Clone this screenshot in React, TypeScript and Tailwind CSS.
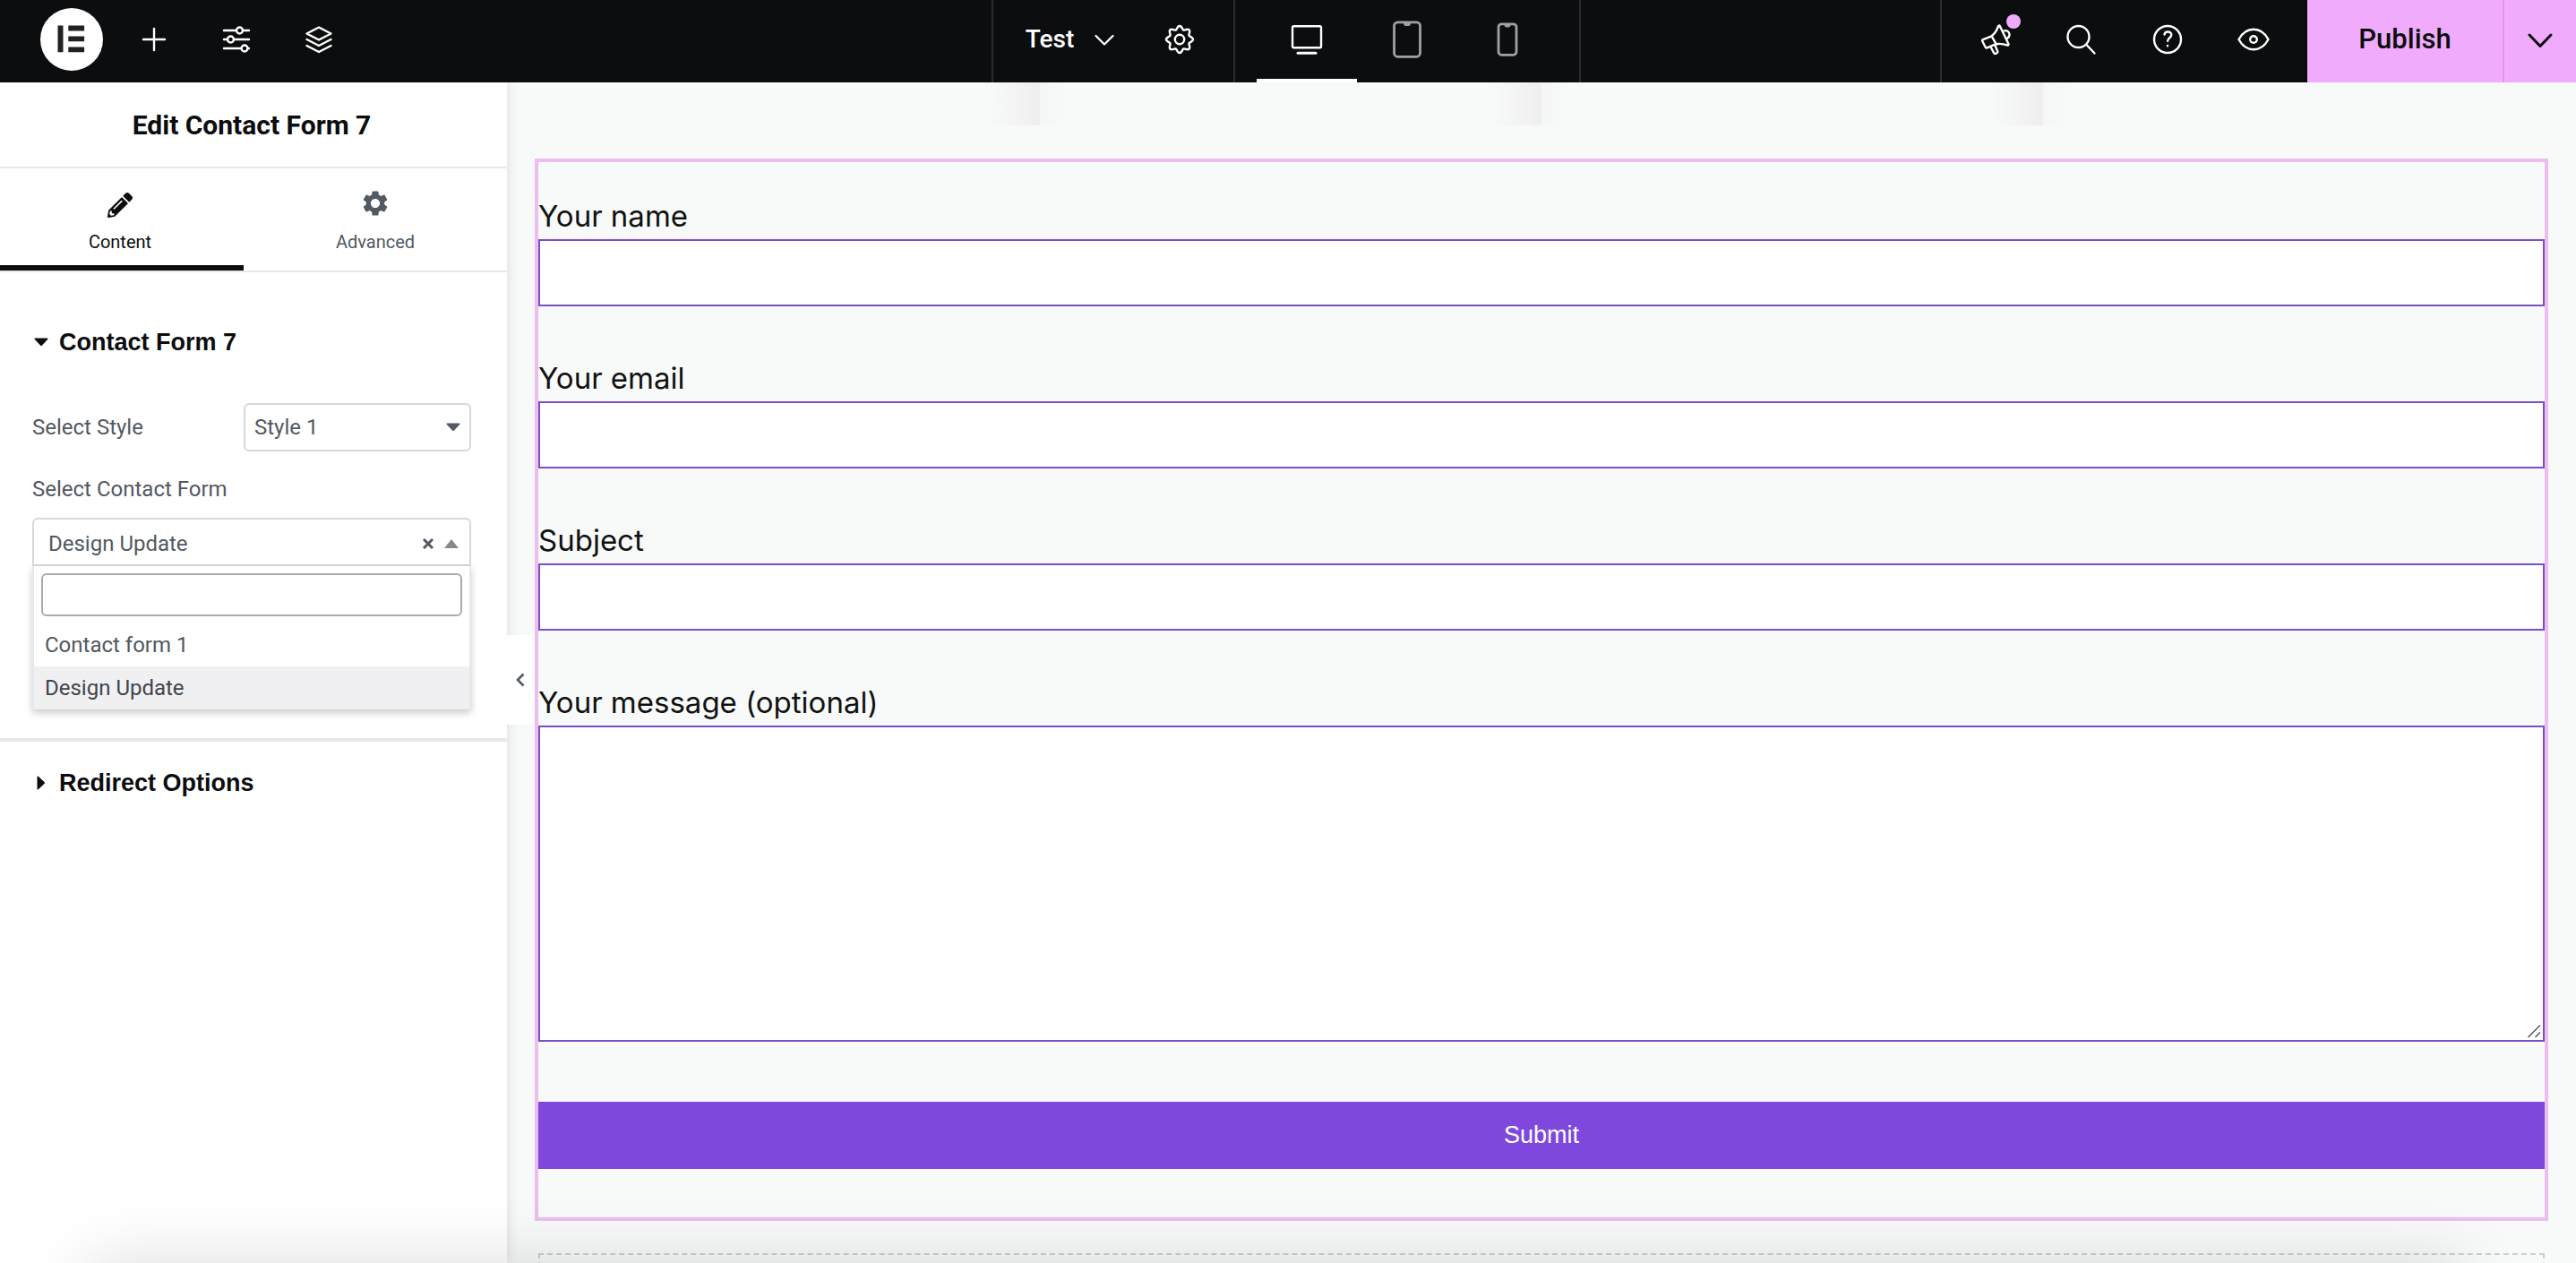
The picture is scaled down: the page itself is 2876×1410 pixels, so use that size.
import React from 'react';
import { FaPencilAlt } from 'react-icons/fa';
import { MdSettings } from 'react-icons/md';

const fields = [
    { id: "your-name", label: "Your name", type: "text" },
    { id: "your-email", label: "Your email", type: "email" },
    { id: "your-subject", label: "Subject", type: "text" },
];

const forms = ["Contact form 1", "Design Update"];

// outline of the page settings cog: a circle with eight soft lobes
const cogPath = Array.from({ length: 96 }, (_, i) => {
    const angle = (i / 96) * Math.PI * 2;
    const radius = 13.2 + 1.8 * Math.cos(8 * angle);
    const x = (18 + radius * Math.cos(angle)).toFixed(2);
    const y = (18 + radius * Math.sin(angle)).toFixed(2);
    return `${i === 0 ? "M" : "L"}${x} ${y}`;
}).join("") + "Z";

interface IconProps {
    children: React.ReactNode;
    className?: string;
}

const Icon: React.FC<IconProps> = ({ children, className = "" }) => (
    <svg
        viewBox="0 0 36 36"
        className={`size-9 ${className}`}
        fill="none"
        stroke="currentColor"
        strokeWidth="2.4"
        strokeLinecap="round"
        strokeLinejoin="round"
        aria-hidden="true"
    >
        {children}
    </svg>
);

interface BarButtonProps {
    label: string;
    className?: string;
    children: React.ReactNode;
}

const BarButton: React.FC<BarButtonProps> = ({ label, className = "w-24", children }) => (
    <button type="button" aria-label={label} className={`relative flex h-[88px] items-center justify-center ${className}`}>
        {children}
    </button>
);

const CaretDown = ({ className = "" }: { className?: string }) => (
    <svg viewBox="0 0 16 10" className={`h-2.5 w-4 ${className}`} fill="currentColor" aria-hidden="true">
        <path d="M1.2 .5h13.6c.7 0 1 .8.5 1.3L8.8 8.7c-.5.5-1.1.5-1.6 0L.7 1.8C.2 1.3.5.5 1.2.5z" />
    </svg>
);

const TopBar = () => (
    <header className="grid h-[92px] shrink-0 grid-cols-[1fr_auto_1fr] bg-[#0c0d0e] text-white">
        <div className="flex pl-[33px]">
            <BarButton label="Elementor menu" className="w-[93px]">
                <svg viewBox="0 0 70 70" className="size-[70px]" aria-hidden="true">
                    <circle cx="35" cy="35" r="35" fill="#fff" />
                    <path d="M19.5 19.6h6v29.6h-6zM31.3 19.6h17.8v5.8H31.3zM31.3 31.5h17.8v5.8H31.3zM31.3 43.4h17.8v5.8H31.3z" fill="#1f2124" />
                </svg>
            </BarButton>
            <BarButton label="Add element" className="w-[92px]">
                <Icon><path d="M18 6v24M6 18h24" /></Icon>
            </BarButton>
            <BarButton label="Site settings" className="w-[92px]">
                <Icon>
                    <path d="M4 8h14M25 8h7M4 18h4M15 18h17M4 28h19.5M31 28h1" />
                    <circle cx="21.5" cy="8" r="3.5" />
                    <circle cx="11.5" cy="18" r="3.5" />
                    <circle cx="27" cy="28" r="3.5" />
                </Icon>
            </BarButton>
            <BarButton label="Structure" className="w-[92px]">
                <Icon>
                    <path d="M18 4.5 4.5 11.5 18 18.5l13.5-7zM4.5 18 18 25l13.5-7M4.5 25 18 32l13.5-7" />
                </Icon>
            </BarButton>
        </div>

        <div className="flex pr-1">
            <div className="flex border-l-2 border-[#2b2c2e] pr-3.5">
                <button type="button" className="flex h-[88px] items-center gap-4 pl-9 pr-5 text-[28px] font-medium">
                    Test
                    <Icon><path d="M8.5 14 18 23.5 27.5 14" strokeWidth="2.2" /></Icon>
                </button>
                <BarButton label="Page settings" className="w-[92px]">
                    <Icon>
                        <path d={cogPath} />
                        <circle cx="18" cy="18" r="5.2" />
                    </Icon>
                </BarButton>
            </div>
            <div className="flex border-x-2 border-[#2b2c2e] px-6">
                <button type="button" aria-label="Desktop" className="flex h-[92px] w-28 items-center justify-center border-b-4 border-white">
                    <Icon>
                        <rect x="2" y="3.3" width="32" height="24" rx="1.5" />
                        <path d="M8 33.2h20" strokeWidth="3" />
                    </Icon>
                </button>
                <BarButton label="Tablet" className="w-28">
                    <svg viewBox="0 0 44 44" className="size-11 text-[#a0a1a3]" fill="none" stroke="currentColor" strokeWidth="2.8" aria-hidden="true">
                        <rect x="7.5" y="2.8" width="29" height="38.5" rx="4" />
                        <path d="M18 3.5h8c0 2.5-1 3.5-2.5 3.5h-3C19 7 18 6 18 3.5z" fill="currentColor" stroke="none" />
                    </svg>
                </BarButton>
                <BarButton label="Mobile" className="w-28">
                    <svg viewBox="0 0 44 44" className="size-11 text-[#a0a1a3]" fill="none" stroke="currentColor" strokeWidth="2.8" aria-hidden="true">
                        <rect x="12" y="4.8" width="20" height="34.5" rx="3.5" />
                        <path d="M18.5 5.5h7c0 2.2-1 3-2.500 3h-2c-1.500 0-2.500-.8-2.500-3z" fill="currentColor" stroke="none" />
                    </svg>
                </BarButton>
            </div>
        </div>

        <div className="flex justify-end">
            <div className="flex border-l-2 border-[#2b2c2e] px-3">
                <BarButton label="What's new">
                    <Icon>
                        <path d="M4 18.2 13.6 14.3C17 11.500 19.500 8 21 3.200c.4-1 1.400-1 1.900 0l9.500 19.800c.4 1-.1 1.800-1.200 1.500-4.500-1.600-8.600-2-12.600-1.300L8.400 27.300c-.8.3-1.500 0-1.800-.8L3.300 20c-.3-.8 0-1.500.7-1.800z" />
                        <path d="M13.6 14.3 18.600 23.200M12.600 26.500l3.400 6.400c.5 1 1.300 1.300 2.100.9l1.200-.5c.9-.5 1.200-1.300.8-2.200l-2.600-6.300M27.500 8.300c3-.8 5.200.8 5.800 3.200.6 2.300-.2 4-2.200 5.200" />
                    </Icon>
                    <span className="absolute right-5 top-4 size-4 rounded-full bg-[#f0abfc]" />
                </BarButton>
                <BarButton label="Finder">
                    <Icon><circle cx="14.5" cy="15" r="12" /><path d="m23.5 24 9 9.5" /></Icon>
                </BarButton>
                <BarButton label="Help">
                    <Icon>
                        <circle cx="18" cy="18" r="15" />
                        <path d="M14.5 12.5c.3-2 1.800-3 3.800-3 2.300 0 4 1.500 4 3.600 0 3-4.200 3.300-4.200 6.600M18 25v.2" />
                    </Icon>
                </BarButton>
                <BarButton label="Preview">
                    <Icon>
                        <path d="M1.5 18C5.5 10.5 11 6.8 18 6.8S30.5 10.5 34.5 18C30.5 25.5 25 29.2 18 29.2S5.5 25.5 1.5 18z" />
                        <circle cx="18" cy="18" r="3.8" />
                    </Icon>
                </BarButton>
            </div>
            <div className="flex bg-[#f0abfc] text-[#0c0d0e]">
                <button type="button" className="w-[218px] pb-1 text-[31px] font-medium">Publish</button>
                <button type="button" aria-label="Save options" className="flex w-[82px] items-center justify-center border-l-2 border-[#e693f2] pb-1">
                    <Icon><path d="M6 13 18 25.5 30 13" strokeWidth="3" /></Icon>
                </button>
            </div>
        </div>
    </header>
);

const Panel = () => (
    <aside className="relative z-10 w-[566px] shrink-0 bg-white text-[#515962] shadow-[0_0_14px_rgba(0,0,0,0.12)]">
        <h1 className="flex h-24 items-center justify-center border-b-2 border-[#e6e8ea] pr-1 text-[30px] font-bold text-[#0c0d0e]">
            Edit Contact Form 7
        </h1>
        <div className="flex h-[116px] border-b-2 border-[#e6e8ea] text-xl">
            <button type="button" className="flex w-[272px] flex-col items-center gap-3 border-b-6 border-[#0c0d0e] pt-[26px] pr-1 text-[#0c0d0e]">
                <FaPencilAlt className="my-px size-7" />
                <span className="leading-7">Content</span>
            </button>
            <button type="button" className="flex flex-1 flex-col items-center gap-3 pt-[22px]">
                <MdSettings className="size-[34px]" />
                <span className="leading-7">Advanced</span>
            </button>
        </div>

        <section className="pt-14 pr-10 pb-8 pl-9">
            <button type="button" className="flex h-11 items-center gap-3 pl-0.5 font-['Liberation_Sans',sans-serif] text-[27px] font-bold text-[#0c0d0e]">
                <CaretDown />
                Contact Form 7
            </button>

            <div className="mt-[46px] flex items-center justify-between">
                <label htmlFor="style" className="text-2xl">Select Style</label>
                <div className="relative w-[254px]">
                    <select id="style" className="h-[54px] w-full appearance-none rounded-md border-2 border-[#d5d8dc] bg-white px-2.5 text-2xl">
                        <option>Style 1</option>
                    </select>
                    <CaretDown className="pointer-events-none absolute right-3 top-[22px]" />
                </div>
            </div>

            <label htmlFor="contact-form" className="mt-[26px] block text-2xl">Select Contact Form</label>
            <div className="mt-4 flex h-[54px] items-center gap-3 rounded-t-md border-2 border-[#d5d8dc] pt-1 pr-3 pl-4">
                <button id="contact-form" type="button" aria-expanded="true" className="flex-1 text-left text-2xl">
                    Design Update
                </button>
                <button type="button" aria-label="Clear">
                    <svg viewBox="0 0 12 12" className="size-3" stroke="currentColor" strokeWidth="3" aria-hidden="true">
                        <path d="M1 1l10 10M11 1 1 11" />
                    </svg>
                </button>
                <svg viewBox="0 0 16 10" className="h-2.5 w-4" fill="#888" aria-hidden="true">
                    <path d="M8 0l8 10H0z" />
                </svg>
            </div>
            <div className="border-x-2 border-[#e6e8ea] pt-2 shadow-[0_4px_8px_rgba(0,0,0,0.2)]">
                <div className="px-2 pb-2">
                    <input type="search" aria-label="Search forms" className="block h-12 w-full rounded-md border-2 border-[#aaa]" />
                </div>
                <ul className="text-2xl">
                    {forms.map((form) => (
                        <li key={form} className="flex h-12 items-center px-3 last:bg-[#f0f0f2] last:text-[#3f444b]">
                            {form}
                        </li>
                    ))}
                </ul>
            </div>
        </section>

        <section className="border-t-4 border-[#e6e8ea] pr-10 pl-9">
            <button type="button" className="flex h-[92px] items-center gap-3 pl-0.5 font-['Liberation_Sans',sans-serif] text-[27px] font-bold text-[#0c0d0e]">
                <CaretDown className="-rotate-90" />
                Redirect Options
            </button>
        </section>

        <button type="button" aria-label="Hide panel" className="absolute left-full top-[617px] flex h-[100px] w-[30px] items-center justify-center bg-white">
            <svg viewBox="0 0 10 16" className="h-4 w-2.5" fill="none" stroke="currentColor" strokeWidth="2.6" aria-hidden="true">
                <path d="M8.5 1.5 2 8l6.500 6.500" />
            </svg>
        </button>
    </aside>
);

const Canvas = () => (
    <main className="min-w-0 flex-1 bg-[#f8faf9] px-[31px] font-['Inter',sans-serif]">
        {/* lower edges of the shadows cast by the cards scrolled out above */}
        <div className="mx-1 grid h-12 grid-cols-4">
            {[0, 1, 2, 3].map((column) => (
                <div key={column} className="group flex justify-between">
                    <span className="w-7 bg-linear-to-r from-[#f5f7f6] to-[#f8faf9] group-first:invisible" />
                    <span className="w-14 bg-linear-to-r from-[#f8faf9] to-[#eeeeee] group-last:invisible" />
                </div>
            ))}
        </div>

        <form className="mt-[37px] flex flex-col border-4 border-[#ebbdf0] pt-10 pb-[54px]">
            {fields.map((field) => (
                <div key={field.id} className="mb-[60px] flex flex-col gap-1.5">
                    <label htmlFor={field.id} className="text-[33px] leading-10 text-[#111]">{field.label}</label>
                    <input id={field.id} type={field.type} className="h-[75px] border-2 border-[#7b4fc4] bg-white px-4 text-3xl" />
                </div>
            ))}
            <div className="flex flex-col gap-1.5">
                <label htmlFor="your-message" className="text-[33px] leading-10 text-[#111]">Your message (optional)</label>
                <div className="relative flex">
                    <textarea id="your-message" className="h-[353px] w-full resize-none border-2 border-[#7b4fc4] bg-white p-4 text-3xl" />
                    <svg viewBox="0 0 16 16" className="pointer-events-none absolute right-1 bottom-1 size-4" stroke="#555" strokeWidth="1.5" aria-hidden="true">
                        <path d="M1.5 15 15 1.5M9.5 15 15 9.5" />
                    </svg>
                </div>
            </div>
            <button type="submit" className="mt-[67px] h-[75px] bg-[#7f48dc] font-['Liberation_Sans',sans-serif] text-[27px] text-white">
                Submit
            </button>
        </form>

        <div className="mx-1 mt-9 h-40 border-2 border-dashed border-[#cfcfcf]" />
    </main>
);

const App = () => (
    <div className="relative flex h-screen flex-col overflow-hidden bg-white font-['Roboto',sans-serif]">
        <TopBar />
        <div className="flex min-h-0 flex-1">
            <Panel />
            <Canvas />
        </div>
        {/* soft shade rising from the bottom of the window */}
        <div className="pointer-events-none absolute left-[100px] right-[126px] top-full z-20 h-60 shadow-[0_0_70px_rgba(0,0,0,0.14)]" />
    </div>
);

export default App;
